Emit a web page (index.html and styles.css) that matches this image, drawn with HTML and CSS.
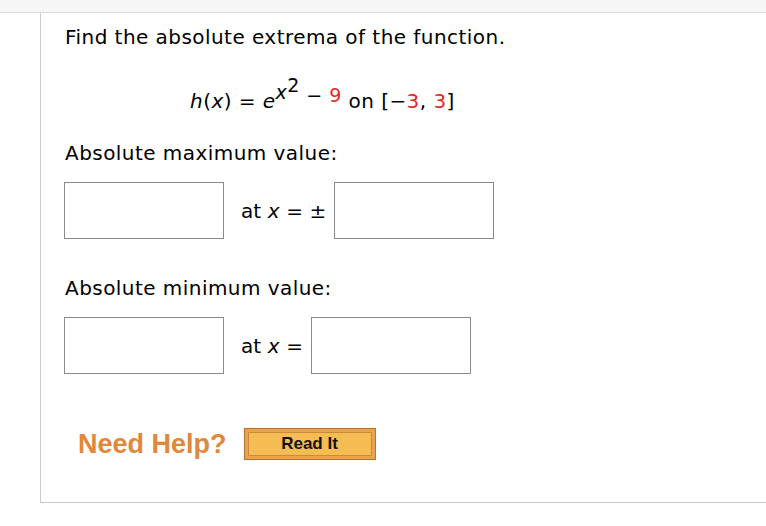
FILE: index.html
```html
<!DOCTYPE html>
<html>
<head>
<meta charset="utf-8">
<link rel="stylesheet" href="styles.css">
</head>
<body>
<div class="topband"></div>
<div class="panel">
  <p class="prompt">Find the absolute extrema of the function.</p>
  <div class="eq"><i>h</i>(<i>x</i>) = <i>e</i><span class="sup"><i class="supx">x</i><span class="sup2">2</span> − <span class="red">9</span></span> on [−<span class="red">3</span>, <span class="red">3</span>]</div>
  <p class="label">Absolute maximum value:</p>
  <div class="row">
    <div class="box"></div>
    <span class="at">at <i>x</i> = ±</span>
    <div class="box"></div>
  </div>
  <p class="label label2">Absolute minimum value:</p>
  <div class="row">
    <div class="box"></div>
    <span class="at">at <i>x</i> =</span>
    <div class="box"></div>
  </div>
  <div class="help">
    <span class="need">Need Help?</span>
    <span class="btn"><span class="btn-in">Read It</span></span>
  </div>
</div>
</body>
</html>
```
FILE: styles.css
```css
html, body { margin: 0; padding: 0; background: #fff; }
body { font-family: "DejaVu Sans", Verdana, sans-serif; color: #000; font-size: 20px; letter-spacing: 0.45px; }
.topband { height: 12px; background: #f6f6f6; border-bottom: 1px solid #dcdcdc; }
.panel { margin-left: 40px; border-left: 1px solid #ccc; border-bottom: 1px solid #c8c8c8; height: 490px; padding-left: 23px; box-sizing: border-box; }
.prompt { margin: 0 0 0 1px; padding-top: 12px; line-height: 24px; }
.eq { margin: 40px 0 0 126px; line-height: 24px; }
.eq i { font-style: italic; }
.sup { position: relative; top: -6px; font-size: 19px; }
.supx { position: relative; top: -3px; }
.sup2 { position: relative; top: -10px; }
.red { color: #e5291f; }
.label { margin: 28px 0 0 1px; line-height: 24px; }
.label2 { margin-top: 37px; }
.row { display: flex; align-items: center; margin-top: 17px; }
.box { width: 158px; height: 55px; border: 1px solid #8a8a8a; }
.at { margin: 0 8px 0 17px; letter-spacing: 0.1px; }
.help { display: flex; align-items: center; margin: 54px 0 0 14px; }
.need { font-family: "Liberation Sans", Arial, sans-serif; font-weight: bold; font-size: 27px; letter-spacing: 0; color: #e0873a; }
.btn { margin-left: 17px; border: 1px solid #b8742e; background: #eba24c; padding: 3px; display: inline-block; }
.btn-in { display: block; width: 122px; height: 22px; border: 1px solid #c98a3a; background: #f4bc53; font-family: "Liberation Sans", Arial, sans-serif; font-weight: bold; font-size: 17px; letter-spacing: 0; text-align: center; line-height: 22px; color: #111; }
```
